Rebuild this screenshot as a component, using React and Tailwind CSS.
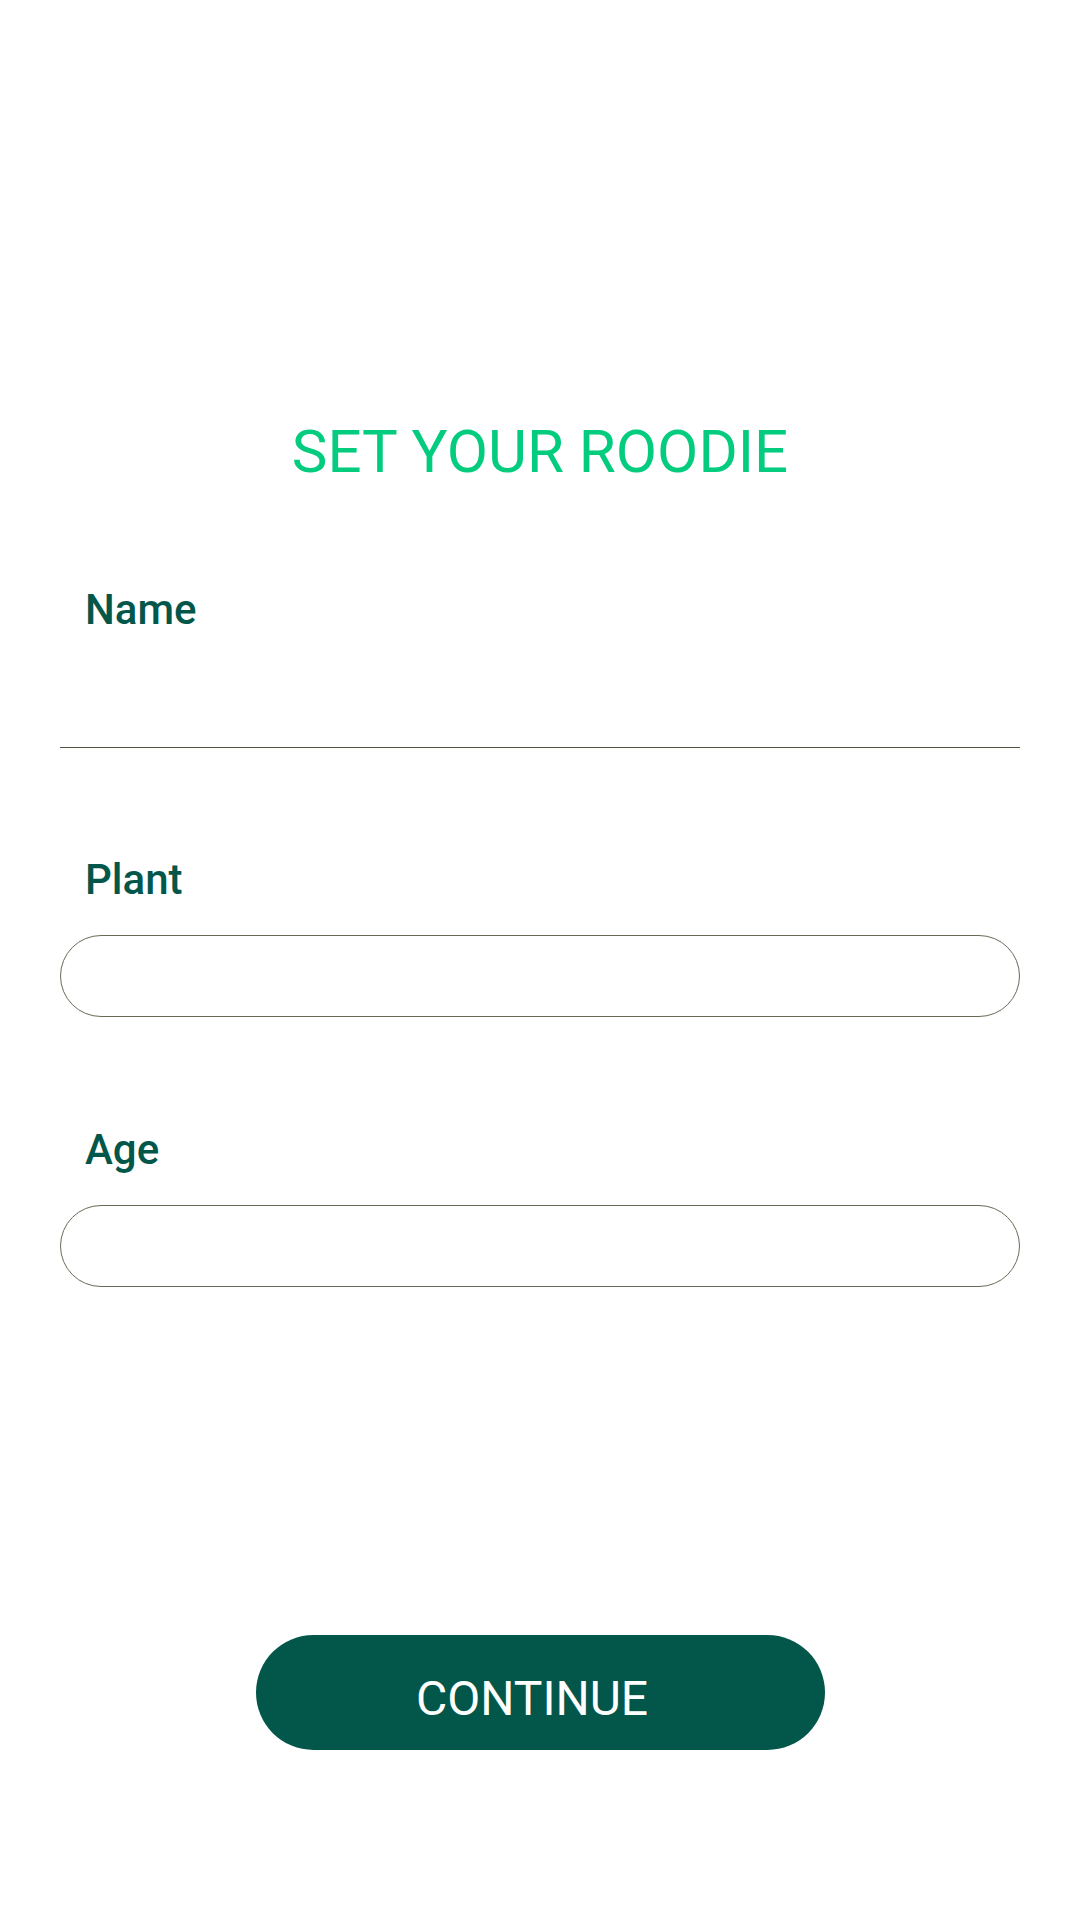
import React, { useState } from 'react';

const Label = ({ children }) => (
  <label className="block pl-[25px] text-[42px] leading-none font-medium text-[#03574a]">
    {children}
  </label>
);

export default function App() {
  const [name, setName] = useState('');
  const [plant, setPlant] = useState('');
  const [age, setAge] = useState('');

  return (
    <div
      className="w-[1080px] min-h-[1918px] bg-white flex flex-col"
      style={{ fontFamily: 'Roboto, "Noto Sans", sans-serif' }}
    >
      <h1 className="pt-[422px] text-center text-[60px] leading-none font-normal text-[#04cc7e]">
        SET YOUR ROODIE
      </h1>

      <div className="mx-[60px] mt-[107px] flex flex-col">
        {/* Name */}
        <Label>Name</Label>
        <input
          type="text"
          value={name}
          onChange={e => setName(e.target.value)}
          className="mt-[16px] h-[101px] w-full border-b border-[#55543f] bg-transparent outline-none text-[40px] px-[25px]"
        />

        {/* Plant */}
        <div className="mt-[111px]">
          <Label>Plant</Label>
        </div>
        <input
          type="text"
          value={plant}
          onChange={e => setPlant(e.target.value)}
          className="mt-[34px] h-[82px] w-full rounded-full border border-[#6b6956] bg-transparent outline-none text-[36px] px-[40px]"
        />

        {/* Age */}
        <div className="mt-[112px]">
          <Label>Age</Label>
        </div>
        <input
          type="text"
          value={age}
          onChange={e => setAge(e.target.value)}
          className="mt-[34px] h-[82px] w-full rounded-full border border-[#6b6956] bg-transparent outline-none text-[36px] px-[40px]"
        />
      </div>

      <button className="self-center mt-[348px] w-[569px] h-[115px] rounded-full bg-[#03574a] text-white text-[48px] leading-none font-normal flex items-center justify-center pt-[12px] pr-[16px]">
        CONTINUE
      </button>
    </div>
  );
}
